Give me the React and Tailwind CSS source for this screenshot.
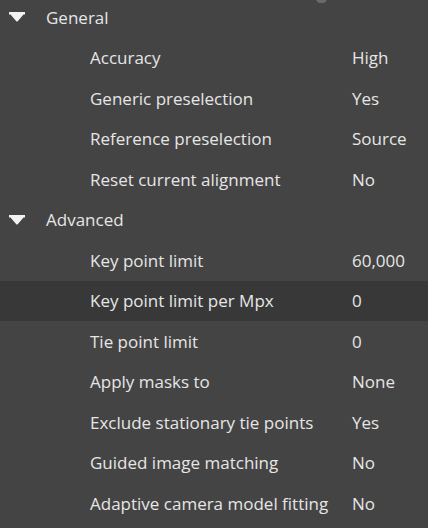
const GROUPS = [
  {
    title: 'General',
    rows: [
      ['Accuracy', 'High'],
      ['Generic preselection', 'Yes'],
      ['Reference preselection', 'Source'],
      ['Reset current alignment', 'No'],
    ],
  },
  {
    title: 'Advanced',
    rows: [
      ['Key point limit', '60,000'],
      ['Key point limit per Mpx', '0', true],
      ['Tie point limit', '0'],
      ['Apply masks to', 'None'],
      ['Exclude stationary tie points', 'Yes'],
      ['Guided image matching', 'No'],
      ['Adaptive camera model fitting', 'No'],
    ],
  },
]

function Caret() {
  return (
    <svg width="16" height="10" viewBox="0 0 16 10" className="text-[#f2f2f2]">
      <path d="M0 0h16v2.5h-1.5L8.5 9.5h-1L1.5 2.5H0z" fill="currentColor" />
    </svg>
  )
}

export default function App() {
  return (
    <div
      className="relative w-[428px] h-[528px] overflow-hidden bg-[#444444] text-[#e6e6e6] text-[17px]"
      style={{ fontFamily: '"Open Sans", "Noto Sans", sans-serif' }}
    >
      <div className="absolute left-[316px] -top-[6px] w-[11px] h-[9px] rounded-full bg-[#6a6a6a]" />
      <div className="-mt-[3px]">
        {GROUPS.map(g => (
          <div key={g.title}>
            <div className="h-[40.5px] flex items-center">
              <div className="w-[46px] pl-[9px] flex items-center"><Caret /></div>
              <span>{g.title}</span>
            </div>
            {g.rows.map(([label, value, active]) => (
              <div key={label} className={`h-[40.5px] flex items-center ${active ? 'bg-[#383838]' : ''}`}>
                <span className="pl-[90px] w-[352px] whitespace-nowrap">{label}</span>
                <span>{value}</span>
              </div>
            ))}
          </div>
        ))}
      </div>
    </div>
  )
}
